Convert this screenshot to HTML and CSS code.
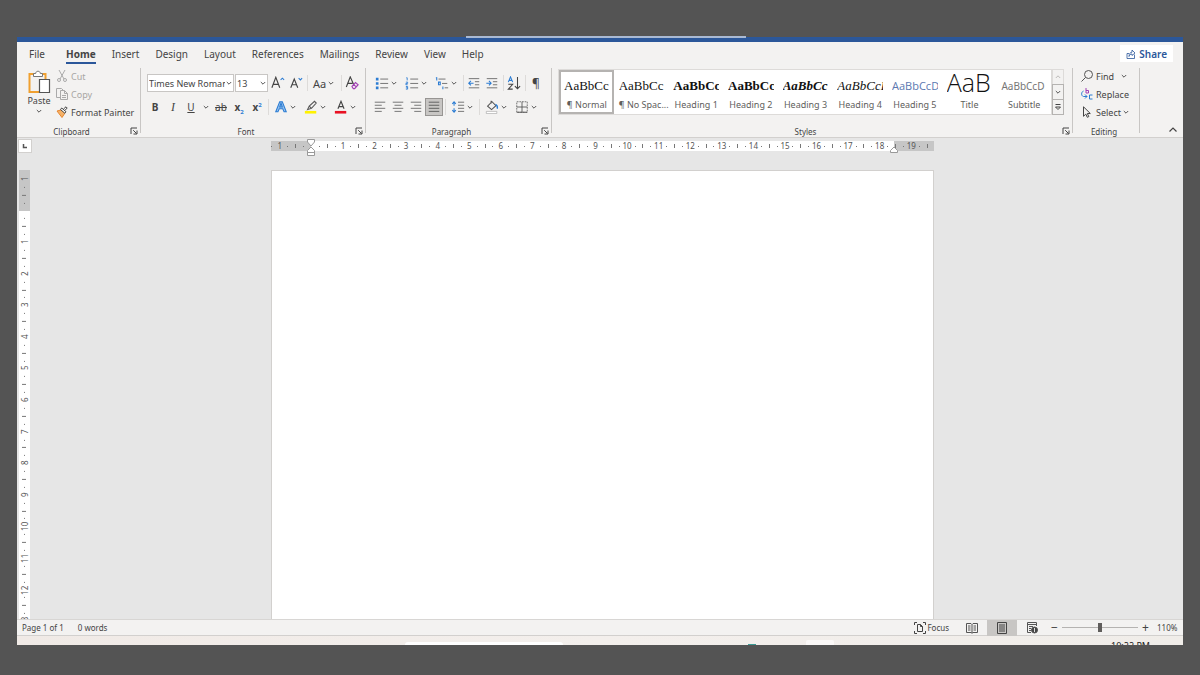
FILE: index.html
```html
<!DOCTYPE html>
<html lang="en">

<head>
    <meta charset="UTF-8">
    <meta name="viewport" content="width=device-width, initial-scale=1.0">
    <title>Document - Word</title>
    <link rel="stylesheet" href="styles.css">
</head>

<body>
    <!-- shared symbols -->
    <svg class="sprite" aria-hidden="true">
        <symbol id="chev" viewBox="0 0 8 8"><path d="M1.800 3 4 5.200 6.200 3" fill="none" stroke="currentColor" stroke-width=".9" /></symbol>
        <symbol id="launch" viewBox="0 0 8 8"><path d="M1 7V1h6M3.200 3.200l3.300 3.300M7 3.500V7H3.500" fill="none" stroke="currentColor" /></symbol>
    </svg>

    <div class="window">
        <div class="titlebar"><span class="drag-line"></span></div>

        <nav class="tabs">
            <a href="#">File</a>
            <a href="#" class="active">Home</a>
            <a href="#">Insert</a>
            <a href="#">Design</a>
            <a href="#">Layout</a>
            <a href="#">References</a>
            <a href="#">Mailings</a>
            <a href="#">Review</a>
            <a href="#">View</a>
            <a href="#">Help</a>
            <button class="share">
                <svg width="10" height="10" viewBox="0 0 10 10" fill="none" stroke="#2b579a" stroke-width=".8"><path d="M3 4.500H1v5h7.500v-4M3 7.500c.2-3 1.200-4.200 3-4.300V1l3 3-3 2.500V5C4.500 5 3.500 6 3 7.500" /></svg>
                Share
            </button>
        </nav>

        <div class="ribbon">
            <!-- Clipboard -->
            <section class="group clipboard">
                <div class="group-body">
                    <button class="paste">
                        <svg width="24" height="25" viewBox="0 0 24 25" fill="none">
                            <path d="M7 4H2.500v18H12M15 4h3.500v5" stroke="#f0a030" stroke-width="2" />
                            <path d="M6.500 6.500v-3h2.200c0-3 4.600-3 4.600 0h2.200v3z" fill="#fff" stroke="#777" />
                            <path d="M12.500 9.500h10v13h-10z" fill="#fff" stroke="#555" stroke-width="1.200" />
                        </svg>
                        Paste
                        <svg class="chev"><use href="#chev" /></svg>
                    </button>
                    <div class="stack">
                        <button class="line" disabled>
                            <svg width="12" height="12" viewBox="0 0 12 12" fill="none" stroke="#aaa"><path d="M3 0l5 9M9 0L4 9" /><circle cx="3" cy="10" r="1.500" /><circle cx="9" cy="10" r="1.500" /></svg>
                            Cut
                        </button>
                        <button class="line" disabled>
                            <svg width="12" height="12" viewBox="0 0 12 12" fill="none" stroke="#aaa"><path d="M4 9.500H.5v-9h5L7 2M4.500 2.500h4l3 3v6h-7zM8.500 2.500v3h3M6 7.500h4M6 9.500h4" /></svg>
                            Copy
                        </button>
                        <button class="line">
                            <svg width="12" height="12" viewBox="0 0 12 12" fill="none"><path d="M1 5l4-1 4 3-3 4.500z" fill="#f4b26a" stroke="#e8862e" /><path d="M4.500 3.500l4.300 3.700 1.200-1.500L5.700 2zM7.500 3L10 .8l1.200 1.200L9 4.300" fill="#fff" stroke="#444" /></svg>
                            Format Painter
                        </button>
                    </div>
                </div>
                <footer><span>Clipboard</span><button class="launcher" aria-label="Clipboard settings"><svg><use href="#launch" /></svg></button></footer>
            </section>

            <!-- Font -->
            <section class="group font">
                <div class="group-body rows">
                    <div class="row">
                        <span class="combo font-name">
                            <select aria-label="Font"><option>Times New Roman</option></select>
                            <svg class="chev"><use href="#chev" /></svg>
                        </span>
                        <span class="combo font-size">
                            <select aria-label="Font size"><option>13</option></select>
                            <svg class="chev"><use href="#chev" /></svg>
                        </span>
                        <button class="tool" aria-label="Grow font"><svg viewBox="0 0 16 16"><path d="M1 13.500L5.500 1.500 10 13.500M2.500 9.500h6" stroke="#444" stroke-width="1.300" /><path d="M11 4.500l2-2 2 2" stroke="#2b7cd3" stroke-width="1.200" /></svg></button>
                        <button class="tool" aria-label="Shrink font"><svg viewBox="0 0 16 16"><path d="M2 13.500l4-10 4 10M3.500 10h5" stroke="#444" stroke-width="1.300" /><path d="M11 2.500l2 2 2-2" stroke="#2b7cd3" stroke-width="1.200" /></svg></button>
                        <i class="sep"></i>
                        <button class="tool wide case">Aa<svg class="chev"><use href="#chev" /></svg></button>
                        <i class="sep"></i>
                        <button class="tool" aria-label="Clear formatting"><svg viewBox="0 0 16 16"><path d="M1.500 12.500L6 1l4 9M3 8.500h5.500" stroke="#444" stroke-width="1.300" /><path d="M8 12l4-4.500 3 2.500-4 4.500H9.500zM10 10l3 2.500" stroke="#a23fb5" stroke-width="1.300" /></svg></button>
                    </div>
                    <div class="row">
                        <button class="tool"><b>B</b></button>
                        <button class="tool"><em>I</em></button>
                        <button class="tool"><u>U</u></button>
                        <button class="tool drop" aria-label="Underline styles"><svg class="chev"><use href="#chev" /></svg></button>
                        <button class="tool"><s>ab</s></button>
                        <button class="tool"><b>x<sub>2</sub></b></button>
                        <button class="tool"><b>x<sup>2</sup></b></button>
                        <i class="sep"></i>
                        <button class="tool wide" aria-label="Text effects"><svg viewBox="0 0 16 16"><path d="M2 13.500L6.500 2h3L14 13.500h-2.500L10 10H6l-1.500 3.500zM6.500 8L8 3.500 9.500 8z" fill="#9cc5ee" stroke="#2b7cd3" stroke-width="1.200" /></svg><svg class="chev"><use href="#chev" /></svg></button>
                        <button class="tool wide" aria-label="Highlight"><svg viewBox="0 0 16 16"><path d="M4 11l2-4L12 1.500 14 3.500 8.500 9.500zM6 7l2.500 2.500" stroke="#555" stroke-width="1.200" /><path d="M1 12.500h13v3H1z" fill="#fff200" /></svg><svg class="chev"><use href="#chev" /></svg></button>
                        <button class="tool wide" aria-label="Font color"><svg viewBox="0 0 16 16"><path d="M4.500 10L8 1.500 11.500 10M5.700 7.500h4.600" stroke="#444" stroke-width="1.300" /><path d="M1 12.500h13v3H1z" fill="#e81123" /></svg><svg class="chev"><use href="#chev" /></svg></button>
                    </div>
                </div>
                <footer><span>Font</span><button class="launcher" aria-label="Font settings"><svg><use href="#launch" /></svg></button></footer>
            </section>

            <!-- Paragraph -->
            <section class="group paragraph">
                <div class="group-body rows">
                    <div class="row">
                        <button class="tool wide" aria-label="Bullets"><svg viewBox="0 0 16 16"><path d="M1 2h3v3H1zM1 7h3v3H1zM1 12h3v3H1z" fill="#2b7cd3" /><path d="M6 3.500h9M6 8.500h9M6 13.500h9" stroke="#666" /></svg><svg class="chev"><use href="#chev" /></svg></button>
                        <button class="tool wide" aria-label="Numbering"><svg viewBox="0 0 16 16"><path d="M1.500 2h1v3M1 7h2v1.500H1V10h2M1 12h2v3H1M1 13.500h2" stroke="#2b7cd3" /><path d="M6 3.500h9M6 8.500h9M6 13.500h9" stroke="#666" /></svg><svg class="chev"><use href="#chev" /></svg></button>
                        <button class="tool wide" aria-label="Multilevel list"><svg viewBox="0 0 16 16"><path d="M1 2h1v3M4 7h2v3H4zM9 12v3" stroke="#2b7cd3" stroke-width="1.200" /><path d="M4 3.500h8M8 8.500h6M11 13.500h4" stroke="#666" /></svg><svg class="chev"><use href="#chev" /></svg></button>
                        <i class="sep"></i>
                        <button class="tool" aria-label="Decrease indent"><svg viewBox="0 0 16 16"><path d="M2 3h12M9 6.500h5M9 10h5M2 13.500h12" stroke="#666" /><path d="M7.500 8.200H2M4.500 5.700L2 8.200l2.500 2.500" stroke="#2b7cd3" stroke-width="1.200" /></svg></button>
                        <button class="tool" aria-label="Increase indent"><svg viewBox="0 0 16 16"><path d="M2 3h12M9 6.500h5M9 10h5M2 13.500h12" stroke="#666" /><path d="M1.500 8.200H7M4.500 5.700L7 8.200l-2.500 2.500" stroke="#2b7cd3" stroke-width="1.200" /></svg></button>
                        <i class="sep"></i>
                        <button class="tool" aria-label="Sort"><svg viewBox="0 0 16 16"><path d="M1.500 7L4 1l2.500 6M2.500 5h3" stroke="#2b7cd3" stroke-width="1.200" /><path d="M1.500 9.500h5l-5 5.500h5" stroke="#444" stroke-width="1.200" /><path d="M12 1v13.500M9 11.500l3 3 3-3" stroke="#444" stroke-width="1.200" /></svg></button>
                        <i class="sep"></i>
                        <button class="tool pilcrow">¶</button>
                    </div>
                    <div class="row">
                        <button class="tool" aria-label="Align left"><svg viewBox="0 0 16 16"><path d="M2 2.500h12M2 6h8M2 9.500h12M2 13h8" stroke="#666" /></svg></button>
                        <button class="tool" aria-label="Center"><svg viewBox="0 0 16 16"><path d="M2 2.500h12M4 6h8M2 9.500h12M4 13h8" stroke="#666" /></svg></button>
                        <button class="tool" aria-label="Align right"><svg viewBox="0 0 16 16"><path d="M2 2.500h12M6 6h8M2 9.500h12M6 13h8" stroke="#666" /></svg></button>
                        <button class="tool selected" aria-label="Justify"><svg viewBox="0 0 16 16"><path d="M2 2.500h12M2 6h12M2 9.500h12M2 13h12" stroke="#555" /></svg></button>
                        <i class="sep"></i>
                        <button class="tool wide" aria-label="Line spacing"><svg viewBox="0 0 16 16"><path d="M3.500 2v4.500M3.500 9.500V14M1.500 4.500l2-2.500 2 2.500M1.500 11.500l2 2.500 2-2.500" stroke="#2b7cd3" stroke-width="1.200" /><path d="M8 2.500h7M8 6h7M8 9.500h7M8 13h7" stroke="#666" /></svg><svg class="chev"><use href="#chev" /></svg></button>
                        <i class="sep"></i>
                        <button class="tool wide" aria-label="Shading"><svg viewBox="0 0 16 16"><path d="M3 7l5-5 4.500 4.500-5 4.500zM7 4V.8" stroke="#555" stroke-width="1.200" /><path d="M12 5c2 1 2.500 3 2 5" stroke="#2b7cd3" stroke-width="1.500" /><path d="M1.500 13h12v2.500h-12z" fill="#fff" stroke="#aaa" stroke-width=".8" /></svg><svg class="chev"><use href="#chev" /></svg></button>
                        <button class="tool wide" aria-label="Borders"><svg viewBox="0 0 16 16"><path d="M2 2h12v12H2z" stroke="#666" stroke-dasharray="2 1" /><path d="M8 2v12M2 8h12M2 14h12" stroke="#555" /></svg><svg class="chev"><use href="#chev" /></svg></button>
                    </div>
                </div>
                <footer><span>Paragraph</span><button class="launcher" aria-label="Paragraph settings"><svg><use href="#launch" /></svg></button></footer>
            </section>

            <!-- Styles -->
            <section class="group styles">
                <div class="group-body">
                    <div class="gallery">
                        <button class="tile current"><span class="sample">AaBbCc</span><span class="name">¶ Normal</span></button>
                        <button class="tile"><span class="sample">AaBbCc</span><span class="name">¶ No Spac...</span></button>
                        <button class="tile"><span class="sample bold">AaBbCc</span><span class="name">Heading 1</span></button>
                        <button class="tile"><span class="sample bold">AaBbCc</span><span class="name">Heading 2</span></button>
                        <button class="tile"><span class="sample bold italic">AaBbCc</span><span class="name">Heading 3</span></button>
                        <button class="tile"><span class="sample italic">AaBbCcD</span><span class="name">Heading 4</span></button>
                        <button class="tile"><span class="sample blue">AaBbCcD</span><span class="name">Heading 5</span></button>
                        <button class="tile"><span class="sample title">AaB</span><span class="name">Title</span></button>
                        <button class="tile"><span class="sample subtitle">AaBbCcD</span><span class="name">Subtitle</span></button>
                    </div>
                    <div class="gallery-scroll">
                        <button disabled aria-label="Previous styles"><svg class="chev up"><use href="#chev" /></svg></button>
                        <button aria-label="Next styles"><svg class="chev"><use href="#chev" /></svg></button>
                        <button aria-label="More styles"><svg class="chev" viewBox="0 0 8 8" fill="none" stroke="currentColor"><path d="M1.500 1.500h5M1.500 4L4 6.500 6.500 4z" /></svg></button>
                    </div>
                </div>
                <footer><span>Styles</span><button class="launcher" aria-label="Styles settings"><svg><use href="#launch" /></svg></button></footer>
            </section>

            <!-- Editing -->
            <section class="group editing">
                <div class="group-body">
                    <div class="stack">
                        <button class="line">
                            <svg width="12" height="12" viewBox="0 0 12 12" fill="none" stroke="#555"><circle cx="7.500" cy="4.500" r="4" /><path d="M4.500 7.500L.5 11.500" /></svg>
                            Find <svg class="chev spaced"><use href="#chev" /></svg>
                        </button>
                        <button class="line">
                            <svg width="12" height="12" viewBox="0 0 12 12" fill="none"><path d="M5 0v5h2.500V2.500H5" stroke="#a23fb5" /><path d="M11.500 7H8.500v4h3M2.500 3C0 4 0 8 2.500 8.500H6M4 6.500l2 2-2 2" stroke="#2b7cd3" /></svg>
                            Replace
                        </button>
                        <button class="line tight">
                            <svg width="12" height="12" viewBox="0 0 12 12" fill="none" stroke="#444"><path d="M2.500.8v9.500l2.300-2.200 1.500 3.200 1.500-.7-1.500-3.100h3z" /></svg>
                            <span>Select</span><svg class="chev"><use href="#chev" /></svg>
                        </button>
                    </div>
                </div>
                <footer><span>Editing</span></footer>
            </section>

            <button class="collapse" aria-label="Collapse the ribbon"><svg width="8" height="8" viewBox="0 0 8 8"><path d="M.5 5.500L4 2l3.500 3.500" fill="none" stroke="#444" stroke-width="1.200" /></svg></button>
        </div>

        <main class="workspace">
            <button class="tab-stop" aria-label="Left tab"><svg width="6" height="6" viewBox="0 0 6 6"><path d="M1.500 1v3.500H5" fill="none" stroke="#555" stroke-width="1.500" /></svg></button>
            <div class="ruler">
                <div class="marks" id="ruler-x"></div>
                <svg class="indent left" viewBox="0 0 8 18"><path d="M.5.5h7V3L4 7 .5 3zM.5 16.500v-5L4 8l3.500 3.500v5zM.5 13.500h7" fill="#fff" stroke="#999" /></svg>
                <svg class="indent right" viewBox="0 0 8 18"><path d="M.5 13.500v-2L4 8l3.500 3.500v2z" fill="#fff" stroke="#999" /></svg>
            </div>
            <div class="ruler-vertical">
                <div class="marks" id="ruler-y"></div>
            </div>
            <article class="page" contenteditable="true" aria-label="Document"></article>
        </main>

        <div class="statusbar">
            <span>Page 1 of 1</span>
            <span>0 words</span>
            <button class="focus">
                <svg width="12" height="12" viewBox="0 0 12 12" fill="none" stroke="#444"><path d="M.5 3V.5H3M9 .5h2.500V3M11.500 9v2.500H9M3 11.500H.5V9M3.500 2.500h3l2 2v5h-5zM6.500 2.500v2h2" /></svg>
                Focus
            </button>
            <button class="view" aria-label="Read mode"><svg width="12" height="12" viewBox="0 0 12 12" fill="none" stroke="#555"><path d="M.5 1.500H5l1 1 1-1h4.500v9H7l-1 .8-1-.8H.5zM6 2.500v8.500M2 4h2.500M2 6h2.500M2 8h2.500M7.500 4H10M7.500 6H10M7.500 8H10" /></svg></button>
            <button class="view on" aria-label="Print layout"><svg width="12" height="12" viewBox="0 0 12 12" fill="none" stroke="#444"><path d="M1.500.5h9v11h-9zM3 3h6M3 5h6M3 7h6M3 9h6" /></svg></button>
            <button class="view" aria-label="Web layout"><svg width="12" height="12" viewBox="0 0 12 12" fill="none" stroke="#555"><path d="M10.500 4V.5h-9v10H5M1.500 2.500h9M3 4.500h4M3 6.500h2M3 8.500h2" /><circle cx="8.500" cy="8" r="3" fill="#444" /><path d="M8.500 6v4" stroke="#ddd" /></svg></button>
            <button class="zoom-btn" aria-label="Zoom out">−</button>
            <input class="zoom" type="range" min="10" max="190" value="100" aria-label="Zoom">
            <button class="zoom-btn" aria-label="Zoom in">+</button>
            <span class="percent">110%</span>
        </div>

        <div class="taskbar">
            <span class="search"></span>
            <span class="app-dot"></span>
            <span class="app-open"></span>
            <span class="clock">10:22 PM</span>
        </div>
    </div>

    <script>
        // Every unit is split in four: number, dot, tick, dot
        function drawRuler(id, count, first, zero) {
            const marks = document.getElementById(id);
            for (let i = 0; i < count; i++) {
                const pos = i + first - zero;
                const mark = document.createElement('span');
                if (pos % 4 === 0) {
                    mark.textContent = pos === 0 ? '' : Math.abs(pos / 4);
                } else {
                    mark.className = pos % 2 === 0 ? 'tick' : 'dot';
                }
                marks.appendChild(mark);
            }
        }

        drawRuler('ruler-x', 84, 0, 5);
        drawRuler('ruler-y', 57, 1, 5);
    </script>
</body>

</html>
```
FILE: styles.css
```css
* {
    box-sizing: border-box;
}

body {
    margin: 0;
    padding: 37px 17px 30px;
    height: 100vh;
    background: #545454;
    color: #444;
    font-family: "Noto Sans", "Open Sans", sans-serif;
    font-size: 9px;
}

button,
select {
    font: inherit;
    color: inherit;
    background: none;
    border: 0;
    padding: 0;
    margin: 0;
}

svg {
    flex: none;
}

.sprite {
    position: absolute;
    width: 0;
    height: 0;
}

.chev {
    width: 8px;
    height: 8px;
}

.chev.up {
    transform: rotate(180deg);
}

.window {
    display: flex;
    flex-direction: column;
    height: 100%;
    background: #f3f2f1;
}

/* Title bar and tabs */
.titlebar {
    position: relative;
    height: 5px;
    background: #2b579a;
}

.drag-line {
    position: absolute;
    top: -1px;
    left: 38.5%;
    width: 24%;
    height: 2px;
    background: #a9b9d3;
}

.tabs {
    display: flex;
    align-items: center;
    gap: 16px;
    height: 25px;
    padding: 0 10px 2px 12px;
    font-size: 10px;
}

.tabs a {
    color: #444;
    text-decoration: none;
    line-height: 16px;
    padding: 2px 0 0;
    border-bottom: 2px solid transparent;
}

.tabs a:first-child {
    margin-right: 5px;
}

.tabs .active {
    font-weight: bold;
    border-color: #2b579a;
}

.share {
    display: flex;
    align-items: center;
    gap: 3px;
    height: 17px;
    margin-left: auto;
    padding: 0 6px;
    background: #fff;
    color: #2b579a;
    font-weight: 600;
}

/* Ribbon */
.ribbon {
    display: flex;
    height: 71px;
    border-bottom: 1px solid #d2d0ce;
}

.group {
    display: flex;
    flex-direction: column;
    position: relative;
    padding: 0 0 0 5px;
}

.group::after {
    content: "";
    position: absolute;
    top: 1px;
    right: 0;
    width: 1px;
    height: 65px;
    background: #c8c6c4;
}

.group-body {
    display: flex;
    flex: 1;
}

.group footer {
    display: flex;
    align-items: center;
    height: 12px;
    margin-left: -9px;
    padding-right: 1px;
    font-size: 8px;
}

.group footer span {
    flex: 1;
    text-align: center;
}

.launcher {
    width: 10px;
    height: 10px;
}

.launcher svg {
    display: block;
    width: 8px;
    height: 8px;
}

.clipboard {
    width: 124px;
}

.font {
    width: 225px;
}

.paragraph {
    width: 186px;
}

.styles {
    flex: 1;
    min-width: 0;
    padding-left: 6px;
}

.editing {
    width: 67px;
}

.paste {
    display: flex;
    flex-direction: column;
    align-items: center;
    width: 34px;
    padding-top: 3px;
    line-height: 12px;
}

.stack {
    display: flex;
    flex-direction: column;
}

.line {
    display: flex;
    align-items: center;
    gap: 3px;
    height: 18px;
    white-space: nowrap;
}

.line.tight {
    gap: 1px;
}

.line.tight span {
    margin-left: 2px;
}

.line:disabled {
    color: #a8a6a4;
}

.editing .stack {
    margin-left: 3px;
}

.line .spaced {
    margin-left: 3px;
}

.rows {
    flex-direction: column;
    gap: 6px;
    padding-top: 7px;
}

.row {
    display: flex;
    align-items: center;
    height: 18px;
}

.combo {
    display: flex;
    align-items: center;
    height: 18px;
    background: #fff;
    border: 1px solid #c8c6c4;
    margin-right: 1px;
}

.combo select {
    appearance: none;
    flex: 1;
    min-width: 0;
    padding-left: 1px;
    overflow: hidden;
}

.font-name {
    width: 87px;
    margin-left: 1px;
}

.font-size {
    width: 33px;
}

.tool {
    display: flex;
    align-items: center;
    justify-content: center;
    width: 18px;
    height: 18px;
    font-size: 10px;
}

.tool svg:not(.chev) {
    width: 14px;
    height: 14px;
    fill: none;
}

.tool.wide {
    width: 30px;
    gap: 1px;
}

.tool.drop {
    width: 12px;
}

.tool.selected {
    background: #c8c6c4;
    border: 1px solid #979593;
}

.tool sub,
.tool sup {
    color: #2b7cd3;
    font-size: 6px;
    line-height: 0;
}

.tool em {
    font-family: "Liberation Serif", serif;
    font-size: 12px;
}

.case {
    font-size: 11px;
}

.pilcrow {
    font-size: 12px;
}

.sep {
    width: 1px;
    height: 16px;
    margin: 0 1px 0 2px;
    background: #dddbd9;
}

/* Styles gallery */
.gallery {
    display: flex;
    flex: 1;
    min-width: 0;
    height: 46px;
    margin-top: 2px;
    background: #fff;
    border: 1px solid #dddbd9;
}

.tile {
    display: flex;
    flex-direction: column;
    flex: 1;
    min-width: 0;
    padding: 0 2px 0 3px;
    border: 2px solid transparent;
    align-items: stretch;
}

.tile.current {
    border-color: #b5b3b1;
}

.sample {
    height: 26px;
    line-height: 28px;
    overflow: hidden;
    white-space: nowrap;
    color: #111;
    font-family: "Liberation Serif", serif;
    font-size: 13px;
    text-align: left;
}

.bold {
    font-weight: bold;
}

.italic {
    font-style: italic;
}

.blue {
    font-family: "Open Sans", sans-serif;
    font-size: 11px;
    color: #5b78b0;
}

.title {
    font-family: "Open Sans", sans-serif;
    font-size: 25px;
    font-weight: 300;
    line-height: 20px;
}

.subtitle {
    font-family: "Noto Sans", sans-serif;
    font-size: 10px;
    color: #767676;
}

.name {
    color: #605e5c;
    line-height: 14px;
    white-space: nowrap;
    text-align: center;
}

.gallery-scroll {
    display: flex;
    flex-direction: column;
    width: 12px;
    height: 46px;
    margin: 2px 9px 0 0;
}

.gallery-scroll button {
    display: flex;
    flex: 1;
    align-items: center;
    justify-content: center;
    border: 1px solid #b5b3b1;
    margin-top: -1px;
}

.gallery-scroll button:disabled {
    margin-top: 0;
    color: #b5b3b1;
    border-color: #dddbd9;
}

.collapse {
    align-self: flex-end;
    width: 43px;
    padding-right: 6px;
    text-align: right;
}

/* Document area */
.workspace {
    display: grid;
    grid-template-columns: 14px 240fr 663fr 249fr;
    grid-template-rows: 32px 1fr;
    flex: 1;
    min-height: 0;
    background: #e6e6e6;
}

.tab-stop {
    grid-column: 1;
    width: 14px;
    height: 14px;
    margin: 1px;
    background: #fff;
    border: 1px solid #d2d0ce;
    line-height: 0;
}

.ruler {
    grid-column: 3;
    position: relative;
    height: 10px;
    margin-top: 3px;
    background: linear-gradient(90deg, #c6c6c6 6%, #fff 6%, #fff 94%, #c6c6c6 94%);
}

.marks {
    display: grid;
    color: #555;
    font-size: 8px;
    line-height: 10px;
}

.marks span {
    display: flex;
    align-items: center;
    justify-content: center;
    min-width: 0;
    min-height: 0;
}

.ruler .marks {
    grid-template-columns: repeat(84, minmax(0, 1fr));
    height: 10px;
    margin: 0 3px 0 -3px;
}

.tick::before,
.dot::before {
    content: "";
    width: 1px;
    height: 1px;
    background: #777;
}

.ruler .tick::before {
    height: 4px;
}

.indent {
    position: absolute;
    top: -2px;
    width: 8px;
    height: 18px;
    transform: translateX(-50%);
}

.indent.left {
    left: 6%;
}

.indent.right {
    left: 94%;
}

.ruler-vertical {
    grid-column: 1;
    grid-row: 2;
    width: 11px;
    margin-left: 2px;
    padding-top: 5px;
    overflow: hidden;
    background: linear-gradient(#c6c6c6 41px, #fff 41px);
}

.ruler-vertical .marks {
    grid-template-rows: repeat(57, minmax(0, 1fr));
    height: calc(100% + 6px);
}

.ruler-vertical .marks span {
    writing-mode: vertical-rl;
    transform: rotate(180deg);
}

.ruler-vertical .tick::before {
    width: 4px;
}

.page {
    grid-column: 3;
    grid-row: 2;
    background: #fff;
    border: 1px solid #d2d0ce;
    border-bottom: 0;
}

/* Status bar */
.statusbar {
    display: flex;
    align-items: center;
    height: 17px;
    padding: 0 5px;
    border-top: 1px solid #d8d6d4;
    border-bottom: 1px solid #d2d0ce;
    font-size: 8px;
}

.statusbar span:first-child {
    margin-right: 14px;
}

.focus {
    display: flex;
    align-items: center;
    gap: 1px;
    margin-left: auto;
    margin-right: 8px;
}

.view {
    display: flex;
    align-items: center;
    justify-content: center;
    width: 30px;
    height: 16px;
}

.view.on {
    background: #c8c6c4;
}

.zoom-btn {
    width: 15px;
    font-size: 12px;
    line-height: 12px;
}

.zoom {
    appearance: none;
    width: 76px;
    height: 9px;
    margin: 0;
    background: linear-gradient(#b5b3b1, #b5b3b1) center / 100% 1px no-repeat;
}

.zoom::-webkit-slider-thumb {
    appearance: none;
    width: 4px;
    height: 9px;
    background: #605e5c;
}

.percent {
    margin-left: 4px;
    width: 21px;
}

.taskbar {
    display: flex;
    align-items: flex-end;
    height: 9px;
    padding: 0 33px 0 388px;
    overflow: hidden;
    background: linear-gradient(90deg, #f0eae6, #f3efec 50%, #f0ede9);
}

.search {
    width: 158px;
    height: 3px;
    background: #fff;
    border-radius: 3px 3px 0 0;
}

.app-dot {
    width: 8px;
    height: 1px;
    margin-left: 185px;
    background: #3b9a94;
}

.app-open {
    width: 28px;
    height: 5px;
    margin-left: 50px;
    background: #fbf9f8;
    border-radius: 2px 2px 0 0;
}

.clock {
    align-self: flex-start;
    margin-left: auto;
    padding-top: 4px;
    color: #222;
    font-size: 9px;
    line-height: 12px;
    white-space: nowrap;
}
```
